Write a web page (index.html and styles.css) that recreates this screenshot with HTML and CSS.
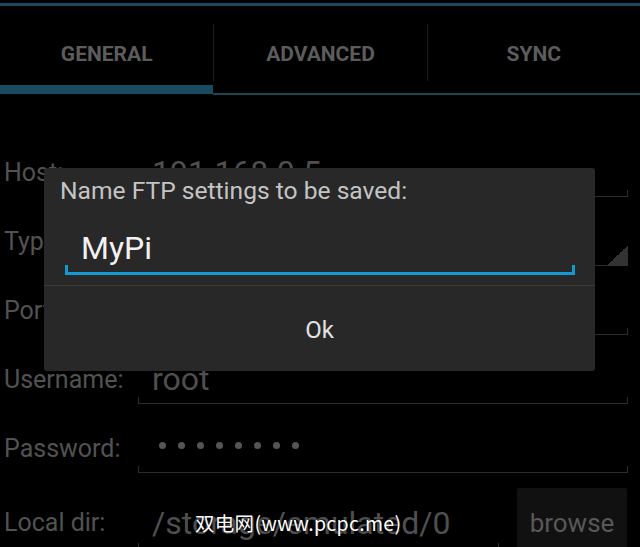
FILE: index.html
```html
<!DOCTYPE html>
<html lang="en">
<head>
    <meta charset="UTF-8">
    <meta name="viewport" content="width=device-width, initial-scale=1.0">
    <title>FTP Settings</title>
    <link rel="stylesheet" href="styles.css">
</head>
<body>
    <div class="screen">
        <div class="top-bar"></div>

        <nav class="tabs">
            <div class="tab active">
                <span class="tab-label">GENERAL</span>
                <span class="tab-line"></span>
            </div>
            <div class="tab">
                <span class="tab-label">ADVANCED</span>
                <span class="tab-line"></span>
            </div>
            <div class="tab">
                <span class="tab-label">SYNC</span>
                <span class="tab-line"></span>
            </div>
        </nav>

        <main class="form">
            <div class="row">
                <span class="label">Host:</span>
                <div class="field">191.168.0.5</div>
            </div>
            <div class="row">
                <span class="label">Type:</span>
                <div class="field spinner"></div>
            </div>
            <div class="row">
                <span class="label">Port:</span>
                <div class="field"></div>
            </div>
            <div class="row">
                <span class="label">Username:</span>
                <div class="field">root</div>
            </div>
            <div class="row">
                <span class="label">Password:</span>
                <div class="field">
                    <div class="dots">
                        <span></span><span></span><span></span><span></span>
                        <span></span><span></span><span></span><span></span>
                    </div>
                </div>
            </div>
            <div class="row dir">
                <span class="label">Local dir:</span>
                <div class="field">/storage/emulated/0</div>
                <button class="browse">browse</button>
            </div>
        </main>

        <!-- save dialog over the settings form -->
        <div class="dialog">
            <div class="dialog-title">Name FTP settings to be saved:</div>
            <div class="dialog-input">MyPi</div>
            <div class="dialog-sep"></div>
            <div class="dialog-ok">Ok</div>
        </div>

        <div class="watermark">双电网(www.pcpc.me)</div>
    </div>
</body>
</html>
```

FILE: styles.css
```css
body {
    margin: 0;
    padding: 0;
    background-color: #000;
    font-family: Roboto, 'Noto Sans', sans-serif;
}

.screen {
    position: relative;
    width: 640px;
    height: 547px;
    overflow: hidden;
    background-color: #000;
}

.top-bar {
    height: 3px;
    margin-top: 3px;
    background-color: #1b4a5c;
}

/* tabs */

.tabs {
    display: flex;
    height: 89px;
}

.tab {
    flex: 1;
    display: flex;
    flex-direction: column;
}

.tab-label {
    margin-top: 18px;
    height: 57px;
    padding-top: 3px;
    box-sizing: border-box;
    display: flex;
    align-items: center;
    justify-content: center;
    font-size: 21px;
    font-weight: bold;
    color: #5c5c5c;
}

.tab + .tab .tab-label {
    border-left: 1px solid #1c1c1c;
}

.tab-line {
    margin-top: auto;
    height: 2px;
    background-color: #1a4555;
}

.tab.active .tab-line {
    height: 9px;
    margin-bottom: 1px;
    background-color: #174b5f;
}

/* form rows */

.form {
    padding-top: 33px;
}

.row {
    display: flex;
    align-items: flex-end;
    height: 69px;
}

.label {
    width: 134px;
    padding-left: 4px;
    line-height: 48px;
    font-size: 25px;
    color: #525252;
}

.field {
    flex: 1;
    margin-right: 12px;
    height: 47px;
    padding-left: 14px;
    line-height: 47px;
    font-size: 32px;
    color: #4f4f4f;
    border-bottom: 1px solid #2c2c2c;
    background:
        linear-gradient(#2c2c2c, #2c2c2c) left bottom / 1px 6px no-repeat,
        linear-gradient(#2c2c2c, #2c2c2c) right bottom / 1px 6px no-repeat;
}

.field.spinner {
    border-bottom: none;
    background:
        linear-gradient(#2c2c2c, #2c2c2c) left bottom / calc(100% - 20px) 1px no-repeat,
        linear-gradient(to top left, #333 50%, transparent 50%) right bottom / 21px 21px no-repeat;
    height: 48px;
}

.dots {
    display: flex;
    gap: 12px;
    height: 47px;
    align-items: center;
    padding-left: 7px;
    margin-top: -3px;
}

.dots span {
    width: 7px;
    height: 7px;
    border-radius: 50%;
    background-color: #555;
}

.row.dir {
    align-items: flex-start;
    height: auto;
    padding-top: 15px;
}

.row.dir .label {
    line-height: 70px;
}

.row.dir .field {
    flex: none;
    width: 347px;
    height: 61px;
    line-height: 70px;
    margin-right: 18px;
}

.browse {
    width: 110px;
    height: 70px;
    margin-right: 12px;
    padding: 0;
    border: none;
    border-radius: 2px;
    background-color: #111;
    color: #585858;
    font-family: Roboto, sans-serif;
    font-size: 26px;
}

/* dialog */

.dialog {
    position: absolute;
    left: 44px;
    top: 168px;
    width: 551px;
    height: 203px;
    display: flex;
    flex-direction: column;
    background-color: #282828;
    border-radius: 3px;
}

.dialog-title {
    padding: 8px 16px 0;
    line-height: 29px;
    font-size: 24.6px;
    color: #c4c4c4;
}

.dialog-input {
    margin: 0 20px 10px 21px;
    padding: 23px 0 4px 16px;
    line-height: 40px;
    font-size: 32px;
    color: #f2f2f2;
    border-bottom: 3px solid #139ad3;
    background:
        linear-gradient(#139ad3, #139ad3) left bottom / 3px 7px no-repeat,
        linear-gradient(#139ad3, #139ad3) right bottom / 3px 7px no-repeat;
}

.dialog-sep {
    height: 1px;
    background-color: #3c3c3c;
}

.dialog-ok {
    flex: 1;
    display: flex;
    align-items: center;
    justify-content: center;
    padding-top: 3px;
    font-size: 24px;
    color: #e2e2e2;
}

.watermark {
    position: absolute;
    left: 195px;
    top: 508px;
    font-family: 'Noto Sans CJK SC', sans-serif;
    font-size: 19.5px;
    letter-spacing: 0.3px;
    color: #fff;
    text-shadow: 0 0 2px #000;
}
```
